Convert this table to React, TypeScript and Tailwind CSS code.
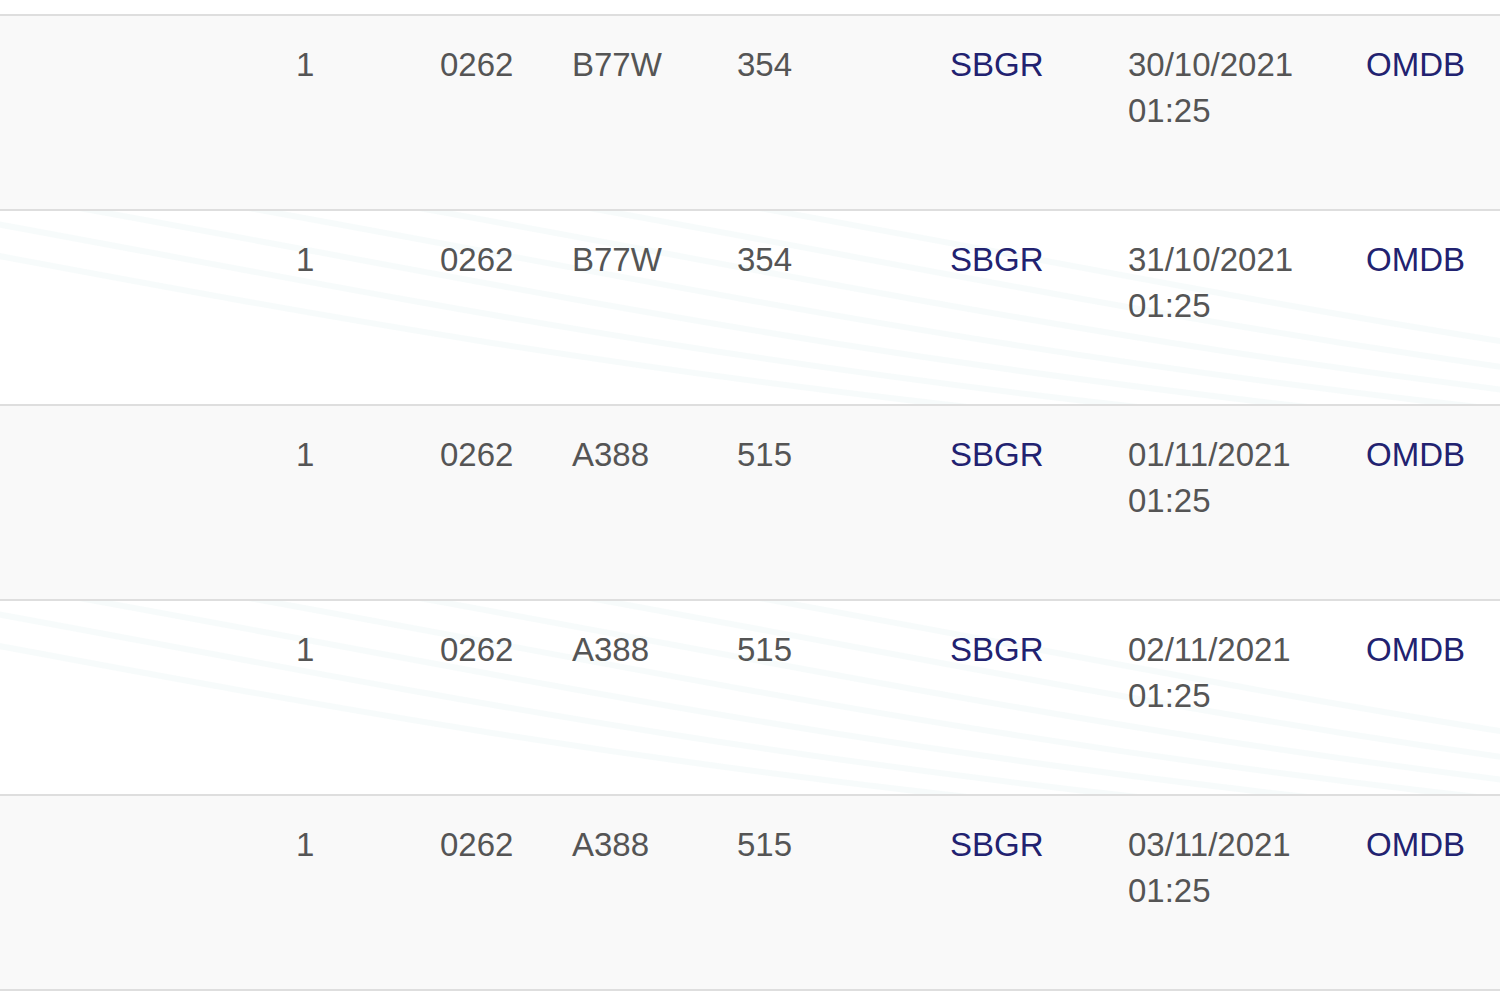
import React from "react"

type Flight = { seq: string; num: string; type: string; seats: string; from: string; date: string; time: string; to: string }

const flights: Flight[] = [
  { seq: "1", num: "0262", type: "B77W", seats: "354", from: "SBGR", date: "30/10/2021", time: "01:25", to: "OMDB" },
  { seq: "1", num: "0262", type: "B77W", seats: "354", from: "SBGR", date: "31/10/2021", time: "01:25", to: "OMDB" },
  { seq: "1", num: "0262", type: "A388", seats: "515", from: "SBGR", date: "01/11/2021", time: "01:25", to: "OMDB" },
  { seq: "1", num: "0262", type: "A388", seats: "515", from: "SBGR", date: "02/11/2021", time: "01:25", to: "OMDB" },
  { seq: "1", num: "0262", type: "A388", seats: "515", from: "SBGR", date: "03/11/2021", time: "01:25", to: "OMDB" },
]

// faint background swooshes behind the white rows
function Waves() {
  return (
    <svg className="pointer-events-none absolute inset-0 h-full w-full" viewBox="0 0 1500 193" preserveAspectRatio="none">
      {Array.from({ length: 7 }).map((_, i) => (
        <path
          key={i}
          d={`M ${-300 + i * 170} -10 C ${150 + i * 170} 70, ${500 + i * 170} 150, ${1100 + i * 170} 210`}
          fill="none"
          stroke="#eef6f7"
          strokeWidth="6"
          opacity="0.45"
        />
      ))}
    </svg>
  )
}

export default function App() {
  return (
    <div className="h-[1000px] w-[1500px] overflow-hidden bg-white font-['Liberation_Sans',Arial,sans-serif] text-[33px] leading-[46px] text-[#555555]">
      <div className="h-[14px]" />
      {flights.map((f, i) => (
        <div
          key={f.date}
          className={`relative grid h-[195px] grid-cols-[296px_144px_132px_165px_213px_178px_238px_1fr] border-t-2 border-[#dedede] pt-[26px] ${
            i % 2 === 0 ? "bg-[#f9f9f9]" : "bg-white"
          }`}
        >
          {i % 2 === 1 && <Waves />}
          <div />
          <div className="relative">{f.seq}</div>
          <div className="relative">{f.num}</div>
          <div className="relative">{f.type}</div>
          <div className="relative">{f.seats}</div>
          <div className="relative text-[#222270]">{f.from}</div>
          <div className="relative">
            {f.date}
            <br />
            {f.time}
          </div>
          <div className="relative text-[#222270]">{f.to}</div>
        </div>
      ))}
      <div className="border-t-2 border-[#dedede]" />
    </div>
  )
}
